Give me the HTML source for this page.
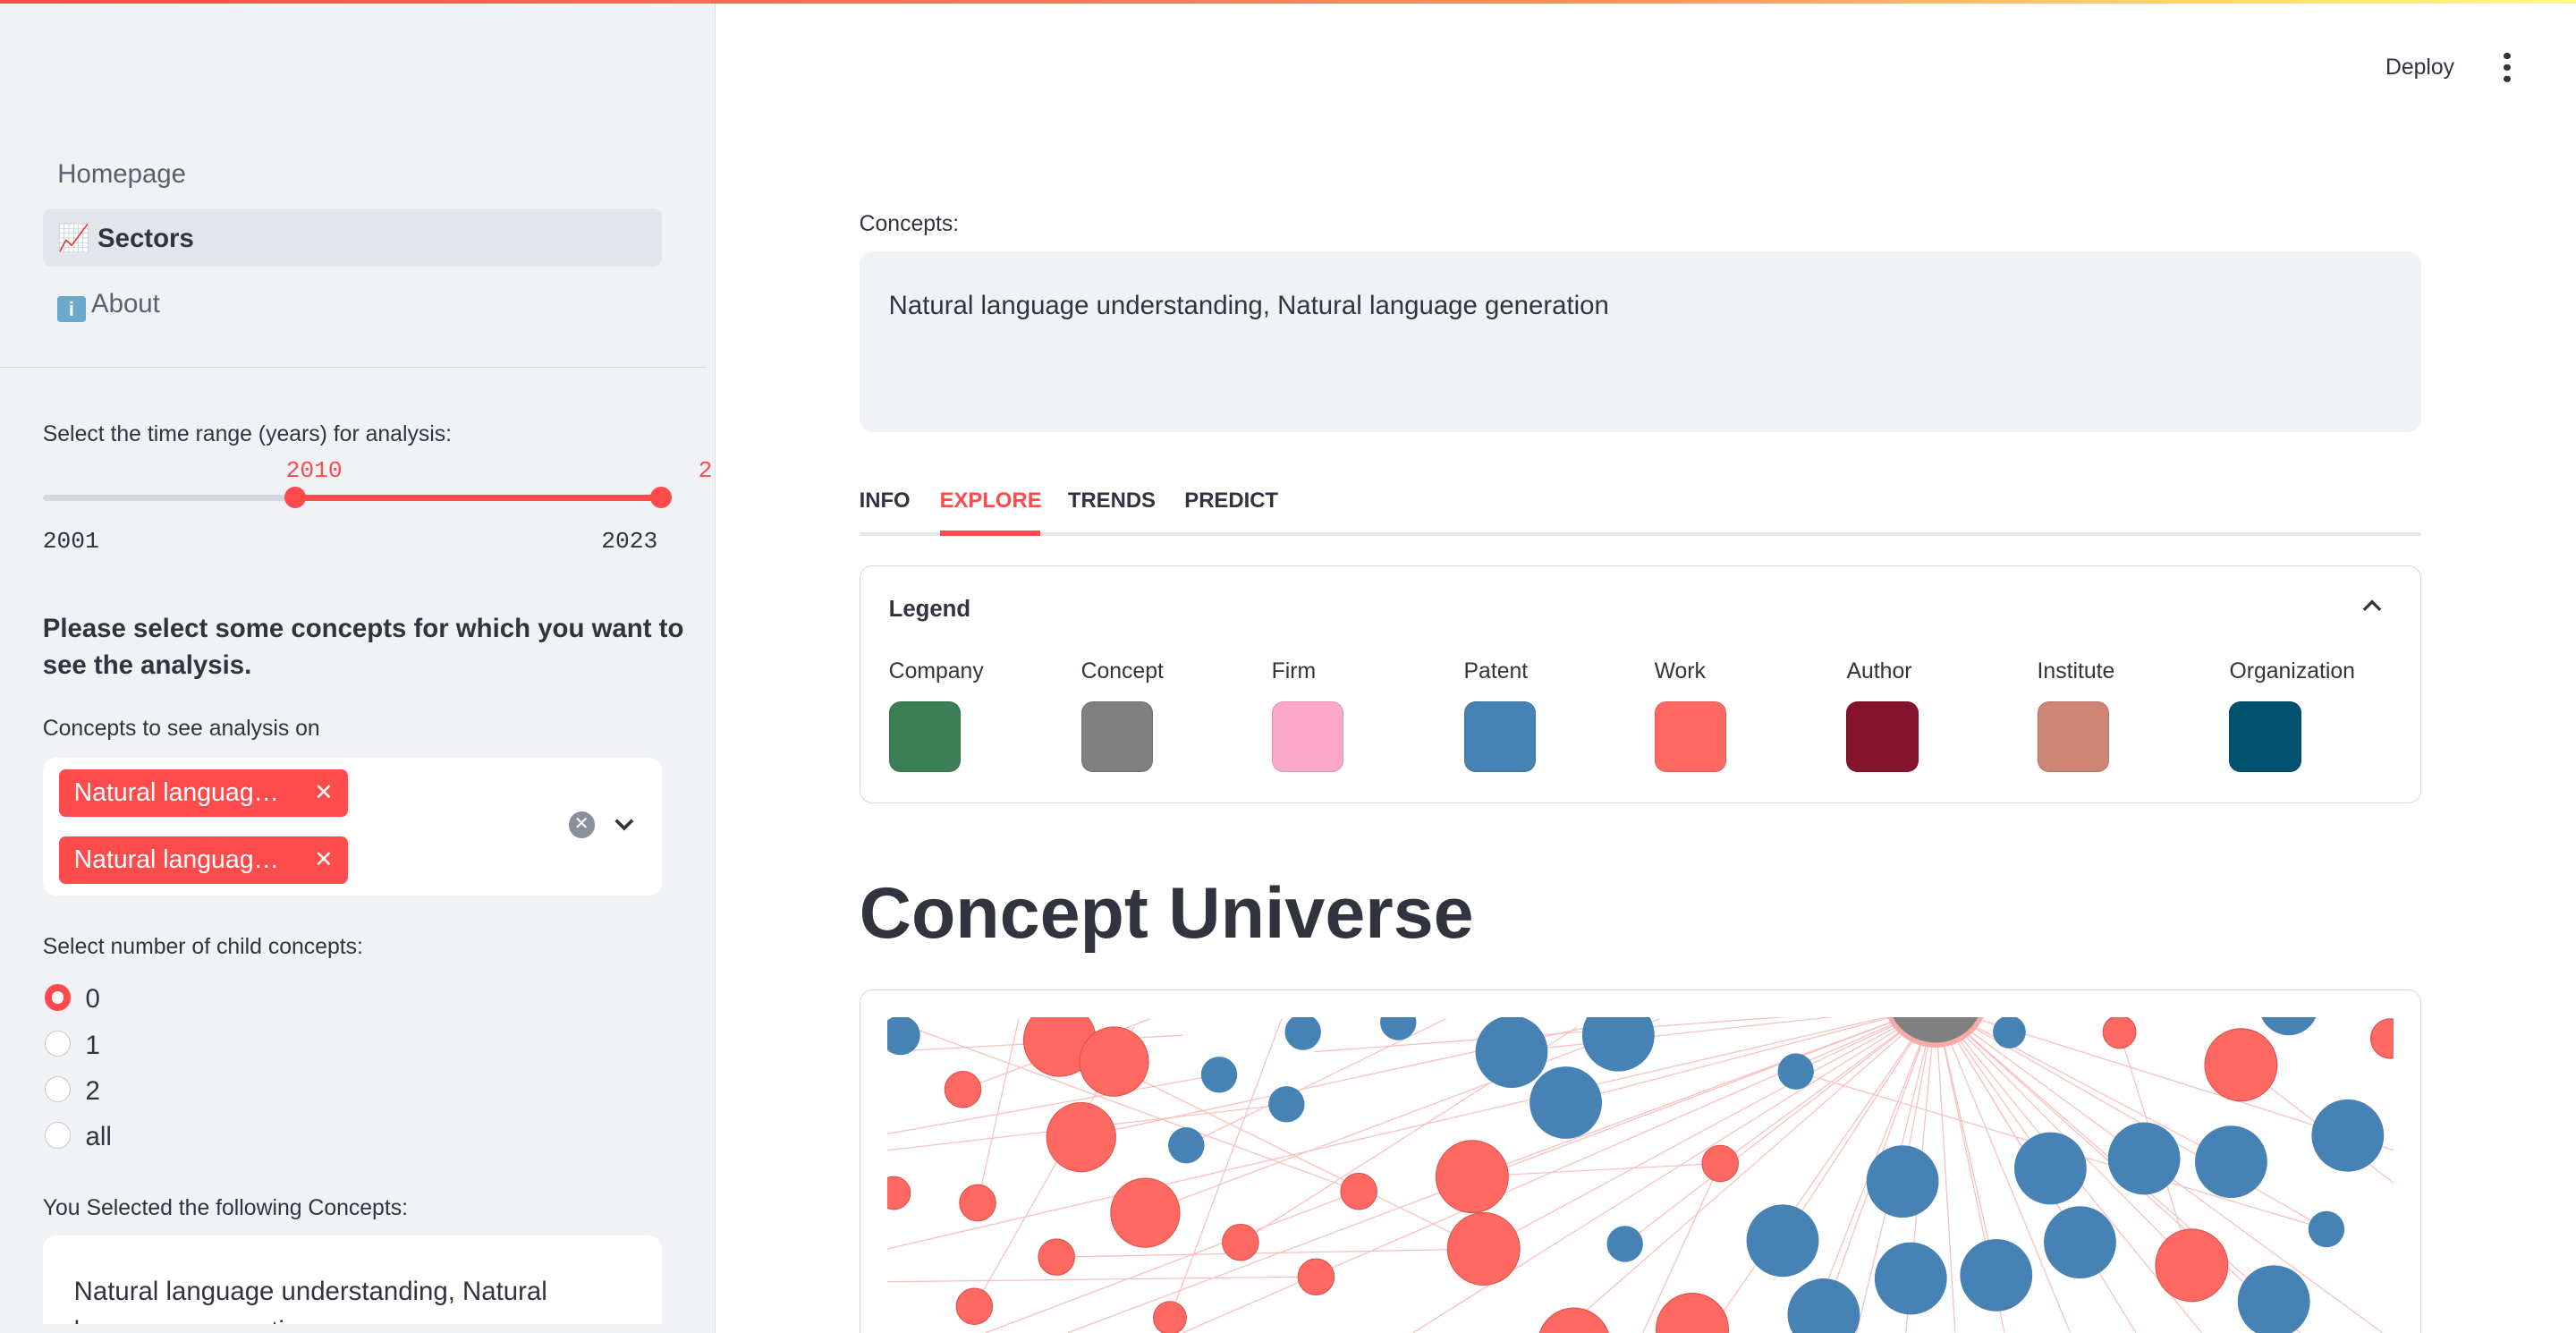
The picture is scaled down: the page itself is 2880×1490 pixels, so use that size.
<!DOCTYPE html>
<html><head><meta charset="utf-8"><style>
html,body{margin:0;padding:0;width:2880px;height:1490px;overflow:hidden;background:#fff}
#w{zoom:1.836735;width:1568px;height:812px;position:relative;overflow:hidden;font-family:"Liberation Sans",sans-serif;color:#31333f}
.a{position:absolute;white-space:nowrap}
.sb{position:absolute;left:0;top:0;width:435px;height:812px;background:#f0f2f6;border-right:1px solid #d9dbe1}
.bar{position:absolute;left:0;top:0;width:1568px;height:2px;background:linear-gradient(90deg,#ff4b4b,#ff8c5a 60%,#fffd80)}
.t14{font-size:13.5px}
.mono{font-family:"Liberation Mono",monospace;font-size:14.3px}
.tag{position:absolute;left:36px;width:176px;height:29px;background:#ff4b4b;border-radius:4px;color:#fff;font-size:15.5px;line-height:29px}
.tag span{position:absolute;left:9px}
.tag b{position:absolute;right:9px;font-weight:normal;font-size:14px}
.rd{position:absolute;left:27px;width:16px;height:16px;border:1px solid #c5c8d0;border-radius:50%;background:#fff;box-sizing:border-box}
.lg{position:absolute;top:409px;font-size:13.5px;transform:translateY(-50%)}
.sw{position:absolute;top:427px;width:44px;height:43px;border-radius:7px;box-sizing:border-box;border:1px solid rgba(0,0,0,.12)}
.tb{position:absolute;top:297px;font-size:13px;font-weight:bold}
</style></head><body><div id="w">
<div class="sb"></div>
<div class="bar"></div>
<div class="a" style="left:35px;top:97px;font-size:16px;color:#5c606c">Homepage</div>
<div class="a" style="left:26px;top:127px;width:377px;height:35px;background:#e2e5eb;border-radius:5px"></div>
<div class="a" style="left:35px;top:136px;font-size:16px;font-weight:bold">📈 Sectors</div>
<div class="a" style="left:35px;top:176px;font-size:16px;color:#5c606c"><span style="display:inline-block;width:17px;height:16px;background:#6aa9c9;color:#fff;font-size:12px;text-align:center;line-height:16px;border-radius:2px;vertical-align:-2px;font-weight:bold">i</span> About</div>
<div class="a" style="left:0;top:223px;width:430px;height:1px;background:#d4d6dc"></div>
<div class="a t14" style="left:26px;top:257px">Select the time range (years) for analysis:</div>
<div class="a mono" style="left:174px;top:278px;color:#ff4b4b">2010</div>
<div class="a mono" style="left:425px;top:278px;color:#ff4b4b">2</div>
<div class="a" style="left:26px;top:301px;width:154px;height:4px;background:#d5d8df;border-radius:2px"></div>
<div class="a" style="left:180px;top:301px;width:223px;height:4px;background:#ff4b4b"></div>
<div class="a" style="left:173px;top:296px;width:13px;height:13px;border-radius:50%;background:#ff4b4b"></div>
<div class="a" style="left:396px;top:296px;width:13px;height:13px;border-radius:50%;background:#ff4b4b"></div>
<div class="a mono" style="left:26px;top:321px">2001</div>
<div class="a mono" style="left:366px;top:321px">2023</div>
<div class="a" style="left:26px;top:372px;font-size:16px;font-weight:bold;line-height:22px">Please select some concepts for which you want to<br>see the analysis.</div>
<div class="a t14" style="left:26px;top:436px">Concepts to see analysis on</div>
<div class="a" style="left:26px;top:461px;width:377px;height:84px;background:#fff;border-radius:8px"></div>
<div class="tag" style="top:468px"><span>Natural languag…</span><b>✕</b></div>
<div class="tag" style="top:509px"><span>Natural languag…</span><b>✕</b></div>
<div class="a" style="left:346px;top:494px;width:16px;height:16px;border-radius:50%;background:#8b8f9c;color:#fff;font-size:11px;text-align:center;line-height:16px">✕</div>
<svg class="a" style="left:373px;top:497px" width="14" height="10"><path d="M2 2l5 5 5-5" stroke="#31333f" stroke-width="2" fill="none"/></svg>
<div class="a t14" style="left:26px;top:569px">Select number of child concepts:</div>
<div class="rd" style="top:599px;border:4.5px solid #ff4b4b"></div><div class="a" style="left:52px;top:599px;font-size:16px">0</div>
<div class="rd" style="top:627px"></div><div class="a" style="left:52px;top:627px;font-size:16px">1</div>
<div class="rd" style="top:655px"></div><div class="a" style="left:52px;top:655px;font-size:16px">2</div>
<div class="rd" style="top:683px"></div><div class="a" style="left:52px;top:683px;font-size:16px">all</div>
<div class="a t14" style="left:26px;top:728px">You Selected the following Concepts:</div>
<div class="a" style="left:26px;top:752px;width:377px;height:70px;background:#fff;border-radius:8px;overflow:hidden">
<div class="a" style="left:19px;top:22px;font-size:16px;line-height:24px">Natural language understanding, Natural<br>language generation</div></div>
<div class="a" style="left:0;top:806px;width:435px;height:6px;background:#f0f2f6"></div>

<div class="a t14" style="left:1452px;top:34px">Deploy</div>
<div class="a" style="left:1524px;top:32px;width:4px;height:4px;border-radius:50%;background:#31333f;box-shadow:0 7px #31333f,0 14px #31333f"></div>
<div class="a t14" style="left:523px;top:129px">Concepts:</div>
<div class="a" style="left:523px;top:153px;width:951px;height:110px;background:#f0f2f6;border-radius:8px"></div>
<div class="a" style="left:541px;top:177px;font-size:16px">Natural language understanding, Natural language generation</div>
<div class="tb" style="left:523px">INFO</div>
<div class="tb" style="left:572px;color:#ff4b4b">EXPLORE</div>
<div class="tb" style="left:650px">TRENDS</div>
<div class="tb" style="left:721px">PREDICT</div>
<div class="a" style="left:523px;top:324px;width:951px;height:2px;background:#e6e8ec"></div>
<div class="a" style="left:572px;top:323px;width:61px;height:3px;background:#ff4b4b"></div>
<div class="a" style="left:523px;top:344px;width:951px;height:145px;border:1px solid #d6d8de;border-radius:8px;box-sizing:border-box"></div>
<div class="a" style="left:541px;top:363px;font-size:14px;font-weight:bold">Legend</div>
<svg class="a" style="left:1438px;top:364px" width="12" height="9"><path d="M1 7l5-5 5 5" stroke="#31333f" stroke-width="1.8" fill="none"/></svg>
<div class="lg" style="left:541px">Company</div><div class="lg" style="left:658px">Concept</div><div class="lg" style="left:774px">Firm</div><div class="lg" style="left:891px">Patent</div><div class="lg" style="left:1007px">Work</div><div class="lg" style="left:1124px">Author</div><div class="lg" style="left:1240px">Institute</div><div class="lg" style="left:1357px">Organization</div>
<div class="sw" style="left:541px;background:#3d7f55"></div><div class="sw" style="left:658px;background:#808080"></div><div class="sw" style="left:774px;background:#fda8c8"></div><div class="sw" style="left:891px;background:#4682b4"></div><div class="sw" style="left:1007px;background:#ff6961"></div><div class="sw" style="left:1124px;background:#86132c"></div><div class="sw" style="left:1240px;background:#cd8575"></div><div class="sw" style="left:1357px;background:#00526e"></div>
<div class="a" style="left:523px;top:531px;font-size:44px;font-weight:bold">Concept Universe</div>
<div class="a" style="left:523px;top:602px;width:951px;height:230px;border:1px solid #d6d8de;border-radius:8px;box-sizing:border-box"></div>
<svg class="a" style="left:540px;top:619px" width="917" height="193" viewBox="540 619 917 193">
<g stroke="#f9c0c0" stroke-width="0.7">
<path d="M1178 612L540 760M1178 612L650 811M1178 612L720 811M1178 612L860 811M1178 612L950 811M1178 612L1040 811M1178 612L1100 811M1178 612L1130 811M1178 612L1160 811M1178 612L1190 811M1178 612L1220 811M1178 612L1260 811M1178 612L1300 811M1178 612L1340 811M1178 612L1400 811M1178 612L1450 811M1178 612L1457 700M1178 612L1416 748M1178 612L1093 652M1178 612L989 757M1178 612L1085 755M1178 612L1158 719M1178 612L1248 711M1178 612L1305 705M1178 612L1358 707M1178 612L1110 800M1178 612L1163 778M1178 612L1215 776M1178 612L1266 756M1178 612L1047 708M1178 612L903 760M1178 612L896 716M1178 612L953 671M1178 612L800 640M1178 612L920 640M1178 612L1384 792M1178 612L1334 770"/>
<path d="M540 640L720 630M540 690L742 654M540 700L783 672M645 633L903 760M658 692L990 620M697 738L1010 620M540 780L800 777M643 765L903 760M755 756L960 625M593 795L690 625M595 732L620 620M827 725L600 811M896 716L1047 708M1047 708L1000 811M722 697L880 620M1290 628L1334 770M1364 648L1457 720M1093 652L1416 748M540 620L827 725M712 802L780 620M586 663L700 620"/>
</g>
<g fill="#ff6961" stroke="#e0504a" stroke-width="0.6">
<circle cx="645" cy="633" r="22"/><circle cx="678" cy="646" r="21"/><circle cx="586" cy="663" r="11"/><circle cx="658" cy="692" r="21"/><circle cx="544" cy="726" r="10"/><circle cx="595" cy="732" r="11"/><circle cx="697" cy="738" r="21"/><circle cx="827" cy="725" r="11"/><circle cx="896" cy="716" r="22"/><circle cx="755" cy="756" r="11"/><circle cx="643" cy="765" r="11"/><circle cx="903" cy="760" r="22"/><circle cx="801" cy="777" r="11"/><circle cx="1047" cy="708" r="11"/><circle cx="1290" cy="628" r="10"/><circle cx="1364" cy="648" r="22"/><circle cx="1455" cy="632" r="12"/><circle cx="1334" cy="770" r="22"/><circle cx="593" cy="795" r="11"/><circle cx="712" cy="802" r="10"/><circle cx="1030" cy="809" r="22"/><circle cx="958" cy="818" r="22"/></g>
<g fill="#4682b4">
<circle cx="548" cy="630" r="12"/><circle cx="793" cy="628" r="11"/><circle cx="851" cy="622" r="11"/><circle cx="742" cy="654" r="11"/><circle cx="783" cy="672" r="11"/><circle cx="920" cy="640" r="22"/><circle cx="985" cy="630" r="22"/><circle cx="953" cy="671" r="22"/><circle cx="722" cy="697" r="11"/><circle cx="1093" cy="652" r="11"/><circle cx="1223" cy="628" r="10"/><circle cx="1158" cy="719" r="22"/><circle cx="1248" cy="711" r="22"/><circle cx="1305" cy="705" r="22"/><circle cx="1358" cy="707" r="22"/><circle cx="1429" cy="691" r="22"/><circle cx="1085" cy="755" r="22"/><circle cx="1163" cy="778" r="22"/><circle cx="1215" cy="776" r="22"/><circle cx="1266" cy="756" r="22"/><circle cx="1416" cy="748" r="11"/><circle cx="1384" cy="792" r="22"/><circle cx="1110" cy="800" r="22"/><circle cx="989" cy="757" r="11"/><circle cx="1393" cy="612" r="18"/></g>
<circle cx="1178" cy="605" r="31" fill="#808080" stroke="#f7aaaa" stroke-width="3"/>
</svg>
</div></body></html>
